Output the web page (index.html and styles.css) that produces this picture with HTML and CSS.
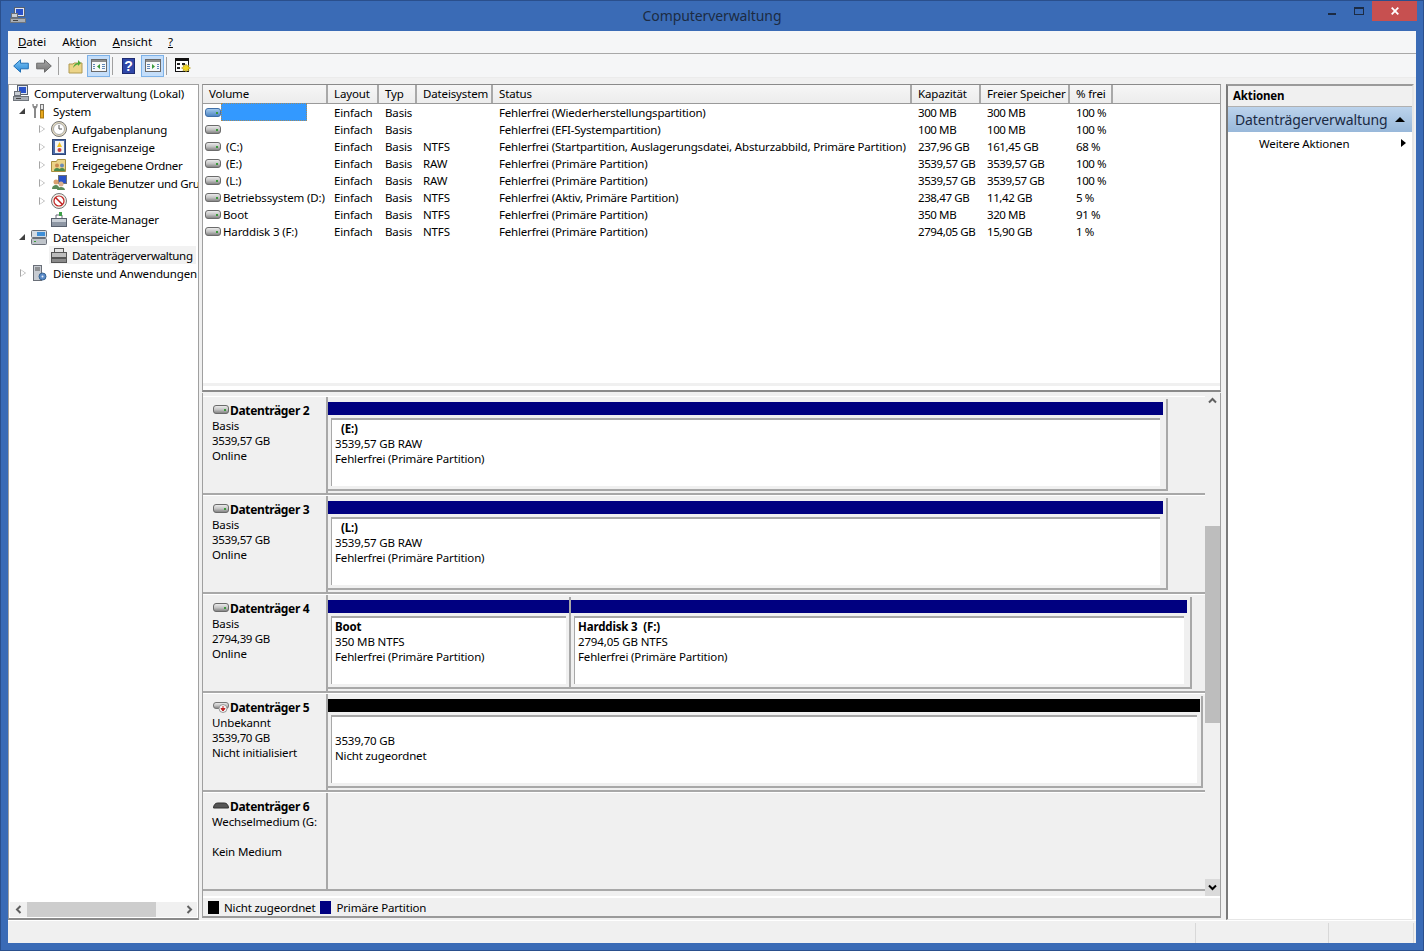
FILE: index.html
```html
<!DOCTYPE html>
<html lang="de">
<head>
<meta charset="utf-8">
<title>Computerverwaltung</title>
<link rel="stylesheet" href="styles.css">
</head>
<body>
<svg class="defs" width="0" height="0">
  <defs>
    <linearGradient id="drv" x1="0" y1="0" x2="0" y2="1"><stop offset="0" stop-color="#f0f0f0"/><stop offset=".5" stop-color="#c4c4c4"/><stop offset="1" stop-color="#7d7d7d"/></linearGradient>
    <linearGradient id="drvb" x1="0" y1="0" x2="0" y2="1"><stop offset="0" stop-color="#a8cdf0"/><stop offset="1" stop-color="#4a82c0"/></linearGradient>
    <linearGradient id="arrb" x1="0" y1="0" x2="0" y2="1"><stop offset="0" stop-color="#7cc4f4"/><stop offset="1" stop-color="#2a88d8"/></linearGradient>
    <linearGradient id="arrg" x1="0" y1="0" x2="0" y2="1"><stop offset="0" stop-color="#a8a8a8"/><stop offset="1" stop-color="#747474"/></linearGradient>
    <symbol id="drive" viewBox="0 0 16 10"><rect x=".5" y=".5" width="15" height="8" rx="2.500" fill="url(#drv)" stroke="#6b6b6b"/><rect x="11" y="4" width="2" height="2" fill="#3c9a3c"/></symbol>
    <symbol id="driveb" viewBox="0 0 16 10"><rect x=".5" y=".5" width="15" height="8" rx="2.500" fill="url(#drvb)" stroke="#3f6fa8"/><rect x="11" y="4" width="2" height="2" fill="#3c9a3c"/></symbol>
    <symbol id="pc" viewBox="0 0 16 16"><rect x="4.500" y=".5" width="10" height="9" fill="#dfe6f2" stroke="#59616e"/><rect x="6" y="2" width="7" height="6" fill="#2a52c8"/><rect x="1.500" y="6.500" width="6" height="4" fill="#c8cdd4" stroke="#6a6f78"/><rect x=".5" y="11.500" width="15" height="4" fill="#a9aeb5" stroke="#70757c"/><path d="M3 13.500h5" stroke="#444"/></symbol>
  </defs>
</svg>
<div class="window">
  <header class="titlebar">
    <svg class="app-icon" width="16" height="16"><use href="#pc"/></svg>
    <span class="title">Computerverwaltung</span>
    <div class="caption">
      <svg class="cap-min" width="8" height="2"><rect width="8" height="2" fill="#1c2b43"/></svg>
      <svg class="cap-max" width="10" height="8"><rect x=".5" y=".5" width="9" height="7" fill="none" stroke="#1c2b43"/><rect width="10" height="2" fill="#1c2b43"/></svg>
      <div class="cap-close"><svg width="8" height="8" viewBox="0 0 8 8"><path d="M.7.7l6.600 6.600M7.300.7L.7 7.300" stroke="#fff" stroke-width="1.800"/></svg></div>
    </div>
  </header>

  <div class="client">
    <nav class="menubar">
      <span class="menu"><u>D</u>atei</span>
      <span class="menu">Ak<u>t</u>ion</span>
      <span class="menu"><u>A</u>nsicht</span>
      <span class="menu"><u>?</u></span>
    </nav>

    <div class="toolbar">
      <svg width="16" height="14" viewBox="0 0 16 14"><path d="M.7 7L7.500.8v3.400h7.800v5.600H7.500v3.400z" fill="url(#arrb)" stroke="#1f6fb5"/></svg>
      <svg class="tool-fwd" width="16" height="14" viewBox="0 0 16 14"><path d="M15.300 7L8.500.8v3.400H.7v5.600h7.800v3.400z" fill="url(#arrg)" stroke="#6a6a6a"/></svg>
      <i class="sep sep1"></i>
      <svg class="tool-up" width="15" height="16" viewBox="0 0 15 16"><path d="M1 6h4l1-1h8v10H1z" fill="#ecd488" stroke="#b09a50"/><path d="M5 10c1-4 3-5 5-5V2l3 3-3 3V6.500c-2 0-3 1.500-5 3.500z" fill="#4fa93a"/></svg>
      <span class="tool-on"><svg width="16" height="13" viewBox="0 0 16 13"><rect x=".5" y=".5" width="15" height="12" fill="#f8f8f8" stroke="#6a6a6a"/><rect x="1" y="1" width="14" height="2" fill="#8c8c8c"/><path d="M2 5h2v1H2zM2 7h2v1H2zM2 9h2v1H2zM11 5h3v1h-3zM11 7h3v1h-3zM11 9h3v1h-3z" fill="#5f86b8"/><path d="M9 5v5L6 7.500z" fill="#3a9a3a"/></svg></span>
      <i class="sep sep2"></i>
      <svg class="tool-help" width="13" height="16" viewBox="0 0 13 16"><rect x=".5" y=".5" width="12" height="15" fill="#2f47a8" stroke="#1d2a70"/><text x="6.500" y="12.500" text-anchor="middle" class="help-q">?</text></svg>
      <span class="tool-on"><svg width="16" height="13" viewBox="0 0 16 13"><rect x=".5" y=".5" width="15" height="12" fill="#f8f8f8" stroke="#6a6a6a"/><rect x="1" y="1" width="14" height="2" fill="#8c8c8c"/><path d="M2 5h3v1H2zM2 7h3v1H2zM2 9h3v1H2zM12 5h2v1h-2zM12 7h2v1h-2zM12 9h2v1h-2z" fill="#5f86b8"/><path d="M7 5v5l3-2.500z" fill="#3a9a3a"/></svg></span>
      <i class="sep sep3"></i>
      <svg width="16" height="16" viewBox="0 0 16 16"><rect x=".5" y=".5" width="13" height="13" fill="#fff" stroke="#111"/><rect x="1" y="1" width="12" height="2" fill="#111"/><path d="M2 5h3v2H2zM7 5h3v2H7zM2 9h3v2H2z" fill="#222"/><path d="M11 6l1 2 2-1-.5 2 2 1-2 1 .5 2-2-1-1 2-1-2-2 1 .5-2-2-1 2-1-.5-2 2 1z" fill="#f4d81c" stroke="#a08a10" stroke-width=".5"/></svg>
    </div>

    <div class="strip"></div>

    <div class="panes">
      <aside class="tree-pane">
        <ul class="tree">
          <li class="node lvl0"><svg width="16" height="16"><use href="#pc"/></svg><span>Computerverwaltung (Lokal)</span></li>
          <li class="node lvl1"><b class="tw open"></b><svg width="16" height="16" viewBox="0 0 16 16"><path d="M4 3v12" stroke="#8a8a8a" stroke-width="2"/><path d="M2 1c0 3 1 4 2 4s2-1 2-4" fill="none" stroke="#8a8a8a" stroke-width="1.500"/><rect x="9.500" y="1.500" width="3" height="5" fill="#e8e8e8" stroke="#777"/><rect x="9.500" y="7.500" width="3" height="7.500" fill="#e8a81c" stroke="#a87810"/></svg><span>System</span></li>
          <li class="node lvl2"><b class="tw"></b><svg width="16" height="16" viewBox="0 0 16 16"><circle cx="8" cy="8" r="7.500" fill="#e6dcc0" stroke="#777"/><circle cx="8" cy="8" r="5.500" fill="#fff" stroke="#aaa"/><path d="M8 4v4h3" fill="none" stroke="#555"/></svg><span>Aufgabenplanung</span></li>
          <li class="node lvl2"><b class="tw"></b><svg width="16" height="16" viewBox="0 0 16 16"><rect x="1.500" y=".5" width="13" height="15" fill="#4a6aa8" stroke="#2f4676"/><rect x="4" y="2" width="9" height="12" fill="#f4f4f4"/><path d="M8.500 3l2.500 5H6z" fill="#f0c020"/><circle cx="8.500" cy="11" r="2" fill="#c84040"/></svg><span>Ereignisanzeige</span></li>
          <li class="node lvl2"><b class="tw"></b><svg width="16" height="16" viewBox="0 0 16 16"><path d="M.5 4.500h5l1-2h8v12H.5z" fill="#ecd488" stroke="#a89040"/><circle cx="6" cy="8.500" r="2" fill="#c88a50"/><circle cx="11" cy="8.500" r="2" fill="#6a8ab8"/><path d="M3 14c0-2 1-3 3-3s3 1 3 3zM8 14c0-2 1-3 3-3s3 1 3 3z" fill="#4a8a4a"/></svg><span class="tight">Freigegebene Ordner</span></li>
          <li class="node lvl2"><b class="tw"></b><svg width="16" height="16" viewBox="0 0 16 16"><rect x="7.500" y=".5" width="8" height="8" fill="#2a52c8" stroke="#6a6f78"/><circle cx="5" cy="7" r="2.500" fill="#d8a070"/><circle cx="10" cy="9" r="2.500" fill="#d8b090"/><path d="M1 14c0-3 2-4 4-4s3 1 3 4zM6 15c0-2 2-3 4-3s4 1 4 3z" fill="#5a8a5a"/></svg><span class="clip tight">Lokale Benutzer und Gru</span></li>
          <li class="node lvl2"><b class="tw"></b><svg width="16" height="16" viewBox="0 0 16 16"><circle cx="8" cy="8" r="7.500" fill="#f0f0e8" stroke="#777"/><circle cx="8" cy="8" r="5" fill="#fff" stroke="#c02020" stroke-width="1.200"/><path d="M4.500 4.500l7 7" stroke="#c02020" stroke-width="1.500"/></svg><span>Leistung</span></li>
          <li class="node lvl2"><i class="tw-space"></i><svg width="16" height="16" viewBox="0 0 16 16"><rect x=".5" y="7.500" width="15" height="8" fill="#8d96a3" stroke="#59616e"/><rect x="1" y="8" width="14" height="3" fill="#c8ced6"/><path d="M5 7V4h6v3" fill="none" stroke="#667"/><rect x="8" y="1" width="3" height="4" fill="#3fa04a"/></svg><span>Geräte-Manager</span></li>
          <li class="node lvl1"><b class="tw open"></b><svg width="16" height="16" viewBox="0 0 16 16"><rect x=".5" y="9.500" width="15" height="6" rx="1" fill="#bfc4ca" stroke="#6a6f78"/><rect x=".5" y="1.500" width="15" height="7" rx="1" fill="#d4dbe4" stroke="#6a6f78"/><rect x="6" y="3" width="8" height="4" fill="#3f8fd8"/><rect x="3" y="12" width="2" height="1" fill="#3c9a3c"/></svg><span>Datenspeicher</span></li>
          <li class="node lvl2 selected"><i class="tw-space"></i><svg width="16" height="16" viewBox="0 0 16 16"><rect x="3.500" y="1.500" width="9" height="4" fill="#e4e4e4" stroke="#555"/><rect x=".5" y="5.500" width="15" height="5" fill="#bcbcbc" stroke="#555"/><rect x=".5" y="11.500" width="15" height="4" fill="#8a8a8a" stroke="#555"/></svg><span class="tight">Datenträgerverwaltung</span></li>
          <li class="node lvl1"><b class="tw"></b><svg width="16" height="16" viewBox="0 0 16 16"><rect x="2.500" y=".5" width="8" height="15" fill="#c8ccd2" stroke="#6a6f78"/><path d="M4 3h5M4 5h5" stroke="#555"/><circle cx="11.500" cy="11.500" r="3.500" fill="#5a8ac8" stroke="#35618f"/><circle cx="11.500" cy="11.500" r="1" fill="#e8f0f8"/></svg><span class="clip">Dienste und Anwendungen</span></li>
        </ul>
        <div class="hscroll">
          <svg class="arr" width="7" height="9" viewBox="0 0 7 9"><path d="M5.500 1L2 4.500 5.500 8" fill="none" stroke="#606060" stroke-width="2"/></svg>
          <div class="hthumb"></div>
          <svg class="arr" width="7" height="9" viewBox="0 0 7 9"><path d="M1.500 1L5 4.500 1.500 8" fill="none" stroke="#606060" stroke-width="2"/></svg>
        </div>
      </aside>

      <main class="center">
        <section class="list">
          <div class="row head">
            <span class="hc">Volume</span><span class="hc">Layout</span><span class="hc">Typ</span><span class="hc">Dateisystem</span><span class="hc">Status</span><span class="hc">Kapazität</span><span class="hc">Freier Speicher</span><span class="hc">% frei</span>
          </div>
          <div class="row"><span class="vol"><svg width="16" height="10"><use href="#driveb"/></svg><span class="redact"></span></span><span>Einfach</span><span>Basis</span><span></span><span>Fehlerfrei (Wiederherstellungspartition)</span><span>300 MB</span><span>300 MB</span><span>100 %</span></div>
          <div class="row"><span class="vol"><svg width="16" height="10"><use href="#drive"/></svg></span><span>Einfach</span><span>Basis</span><span></span><span>Fehlerfrei (EFI-Systempartition)</span><span>100 MB</span><span>100 MB</span><span>100 %</span></div>
          <div class="row"><span class="vol"><svg class="dr" width="16" height="10"><use href="#drive"/></svg><span class="drv-l">(C:)</span></span><span>Einfach</span><span>Basis</span><span>NTFS</span><span>Fehlerfrei (Startpartition, Auslagerungsdatei, Absturzabbild, Primäre Partition)</span><span>237,96 GB</span><span>161,45 GB</span><span>68 %</span></div>
          <div class="row"><span class="vol"><svg class="dr" width="16" height="10"><use href="#drive"/></svg><span class="drv-l">(E:)</span></span><span>Einfach</span><span>Basis</span><span>RAW</span><span>Fehlerfrei (Primäre Partition)</span><span>3539,57 GB</span><span>3539,57 GB</span><span>100 %</span></div>
          <div class="row"><span class="vol"><svg class="dr" width="16" height="10"><use href="#drive"/></svg><span class="drv-l">(L:)</span></span><span>Einfach</span><span>Basis</span><span>RAW</span><span>Fehlerfrei (Primäre Partition)</span><span>3539,57 GB</span><span>3539,57 GB</span><span>100 %</span></div>
          <div class="row"><span class="vol"><svg class="dr" width="16" height="10"><use href="#drive"/></svg><span>Betriebssystem (D:)</span></span><span>Einfach</span><span>Basis</span><span>NTFS</span><span>Fehlerfrei (Aktiv, Primäre Partition)</span><span>238,47 GB</span><span>11,42 GB</span><span>5 %</span></div>
          <div class="row"><span class="vol"><svg class="dr" width="16" height="10"><use href="#drive"/></svg><span>Boot</span></span><span>Einfach</span><span>Basis</span><span>NTFS</span><span>Fehlerfrei (Primäre Partition)</span><span>350 MB</span><span>320 MB</span><span>91 %</span></div>
          <div class="row"><span class="vol"><svg class="dr" width="16" height="10"><use href="#drive"/></svg><span>Harddisk 3 (F:)</span></span><span>Einfach</span><span>Basis</span><span>NTFS</span><span>Fehlerfrei (Primäre Partition)</span><span>2794,05 GB</span><span>15,90 GB</span><span>1 %</span></div>
          <div class="list-band"></div>
        </section>

        <section class="disks">
          <div class="disk-area">
            <div class="disk-scroll">
              <div class="disk">
                <div class="disk-info"><div class="disk-name"><svg width="16" height="10"><use href="#drive"/></svg><b>Datenträger 2</b></div><div>Basis</div><div>3539,57 GB</div><div>Online</div></div>
                <div class="disk-map w-raw"><div class="part"><div class="bar"></div><div class="box"><div class="p-name indent">(E:)</div><div>3539,57 GB RAW</div><div>Fehlerfrei (Primäre Partition)</div></div></div></div>
              </div>
              <div class="disk">
                <div class="disk-info"><div class="disk-name"><svg width="16" height="10"><use href="#drive"/></svg><b>Datenträger 3</b></div><div>Basis</div><div>3539,57 GB</div><div>Online</div></div>
                <div class="disk-map w-raw"><div class="part"><div class="bar"></div><div class="box"><div class="p-name indent">(L:)</div><div>3539,57 GB RAW</div><div>Fehlerfrei (Primäre Partition)</div></div></div></div>
              </div>
              <div class="disk">
                <div class="disk-info"><div class="disk-name"><svg width="16" height="10"><use href="#drive"/></svg><b>Datenträger 4</b></div><div>Basis</div><div>2794,39 GB</div><div>Online</div></div>
                <div class="disk-map w-two">
                  <div class="part p-boot"><div class="bar"></div><div class="box"><div class="p-name">Boot</div><div>350 MB NTFS</div><div>Fehlerfrei (Primäre Partition)</div></div></div>
                  <div class="part p-grow"><div class="bar"></div><div class="box"><div class="p-name">Harddisk 3&nbsp; (F:)</div><div>2794,05 GB NTFS</div><div>Fehlerfrei (Primäre Partition)</div></div></div>
                </div>
              </div>
              <div class="disk">
                <div class="disk-info"><div class="disk-name"><svg width="16" height="12" viewBox="0 0 16 12"><rect x=".5" y="1.500" width="15" height="6" rx="2.500" fill="url(#drv)" stroke="#777"/><circle cx="10" cy="7.500" r="4" fill="#f4f4f4" stroke="#999"/><path d="M10 5v3M8 7.500l2 2.500 2-2.500z" stroke="#c02020" fill="#c02020"/></svg><b>Datenträger 5</b></div><div>Unbekannt</div><div>3539,70 GB</div><div>Nicht initialisiert</div></div>
                <div class="disk-map w-un"><div class="part"><div class="bar bar-black"></div><div class="box"><div class="p-name">&nbsp;</div><div>3539,70 GB</div><div>Nicht zugeordnet</div></div></div></div>
              </div>
              <div class="disk disk-last">
                <div class="disk-info"><div class="disk-name"><svg width="16" height="10" viewBox="0 0 16 10"><path d="M.5 7c0-3 2-5 4-5h7c2 0 4 2 4 5z" fill="#555" stroke="#333"/></svg><b>Datenträger 6</b></div><div class="media">Wechselmedium (G:</div><div>&nbsp;</div><div>Kein Medium</div></div>
                <div class="disk-map"></div>
              </div>
            </div>
            <div class="vscroll">
              <svg class="v-up" width="9" height="7" viewBox="0 0 9 7"><path d="M1 5.500L4.500 2 8 5.500" fill="none" stroke="#606060" stroke-width="2"/></svg>
              <div class="vthumb"></div>
              <div class="v-down"><svg width="9" height="7" viewBox="0 0 9 7"><path d="M1 1.500L4.500 5 8 1.500" fill="none" stroke="#000" stroke-width="2"/></svg></div>
            </div>
          </div>
          <div class="legend"><i class="sw sw-k"></i><span>Nicht zugeordnet</span><i class="sw sw-b"></i><span>Primäre Partition</span></div>
        </section>
      </main>

      <aside class="actions">
        <div class="a-head">Aktionen</div>
        <div class="a-sec"><span>Datenträgerverwaltung</span><i class="tri-up"></i></div>
        <div class="a-item"><span>Weitere Aktionen</span><i class="tri-right"></i></div>
      </aside>
    </div>

    <footer class="status"><i class="st st1"></i><i class="st st2"></i><i class="st st3"></i></footer>
  </div>
</div>
</body>
</html>
```
FILE: styles.css
```css
* { box-sizing: border-box; }
html, body { margin: 0; padding: 0; }
body { width: 1424px; height: 951px; overflow: hidden; font: 11.5px/17px "Noto Sans", "Open Sans", sans-serif; letter-spacing: -.15px; color: #000; background: #3a6bb6; }
.defs { position: absolute; }
ul { list-style: none; margin: 0; padding: 0; }
svg { display: block; flex: none; }

.window { width: 1424px; height: 951px; display: flex; flex-direction: column; background: #3a6bb6; border: 1px solid #2a4f8c; padding: 0 7px 7px 7px; }
.titlebar { height: 30px; display: flex; align-items: flex-start; position: relative; flex: none; }
.app-icon { margin: 6px 0 0 2px; }
.title { position: absolute; left: 0; right: 0; top: 5px; text-align: center; font-size: 14px; letter-spacing: -.1px; line-height: 20px; color: #1c2b43; }
.caption { margin-left: auto; display: flex; align-items: flex-start; }
.cap-min { margin: 12px 18px 0 0; }
.cap-max { margin: 6px 8px 0 0; }
.cap-close { width: 45px; height: 20px; background: #c75050; display: flex; align-items: center; justify-content: center; margin: 0 -1px 0 0; }

.client { flex: 1; display: flex; flex-direction: column; background: #f0f0f0; min-height: 0; }
.menubar { height: 23px; background: #f5f6f7; display: flex; padding: 2px 0 0 10px; gap: 16px; border-bottom: 1px solid #a8a8a8; flex: none; }
.menu { line-height: 17px; letter-spacing: -.05px; }
.toolbar { height: 23px; background: #f5f6f7; display: flex; align-items: center; padding-left: 5px; flex: none; }
.tool-fwd { margin-left: 7px; }
.sep { width: 1px; height: 18px; background: #a0a0a0; flex: none; }
.sep1 { margin: 0 9px 0 6px; }
.sep2 { margin: 0 9px 0 2px; }
.sep3 { margin: 0 8px 0 2px; }
.tool-up { margin-right: 4px; }
.tool-on { width: 23px; height: 22px; background: #c4defa; border: 1px solid #7db2e8; display: flex; align-items: center; justify-content: center; flex: none; }
.tool-help { margin-right: 6px; }
.help-q { font: bold 14px "Liberation Sans", sans-serif; fill: #fff; }
.strip { height: 7px; background: #f0f0f0; border-top: 1px solid #ebebeb; flex: none; }

.panes { flex: 1; display: flex; min-height: 0; padding-right: 2px; }

.tree-pane { width: 191px; flex: none; background: #fff; border: 1px solid #a0a0a0; border-width: 1px 1px 2px 1px; border-color: #a0a0a0 #a0a0a0 #8a8a8a #a0a0a0; display: flex; flex-direction: column; overflow: hidden; }
.tree { flex: 1; }
.node { height: 18px; display: flex; align-items: center; white-space: nowrap; overflow: hidden; }
.lvl0 { height: 17px; padding: 0 0 1px 4px; }
.lvl0 svg { margin-right: 5px; }
.lvl1 { padding-left: 10px; }
.lvl1 svg { margin-right: 6px; }
.lvl2 { padding-left: 29px; }
.lvl2 svg { margin-right: 5px; }
.tw { width: 9px; height: 9px; flex: none; margin-right: 3px; position: relative; }
.tw::before { content: ""; position: absolute; left: 1px; top: 0; border-left: 6px solid #a6a6a6; border-top: 4.500px solid transparent; border-bottom: 4.500px solid transparent; }
.tw::after { content: ""; position: absolute; left: 2px; top: 1.500px; border-left: 4px solid #fff; border-top: 3px solid transparent; border-bottom: 3px solid transparent; }
.tw.open::before { border: 0; border-right: 6px solid #404040; border-top: 6px solid transparent; top: 1px; left: 0; }
.tw.open::after { display: none; }
.tw-space { width: 9px; flex: none; }
.lvl2 .tw, .lvl2 .tw-space { margin-right: 4px; }
.selected { background: linear-gradient(#f2f2f2, #f2f2f2) 40px 0 / 147px 100% no-repeat; }
.clip { overflow: hidden; }
.tight { letter-spacing: -.3px; }

.hscroll { height: 15px; margin: 0 1px 1px 1px; background: #f0f0f0; display: flex; align-items: center; flex: none; }
.arr { margin: 0 5px; }
.hthumb { width: 129px; height: 15px; background: #cdcdcd; }
.hscroll .arr:last-child { margin-left: auto; margin-right: 4px; }

.center { width: 1019px; margin-left: 3px; flex: none; display: flex; flex-direction: column; min-height: 0; }
.list { height: 308px; background: #fff; border: 1px solid #a0a0a0; border-bottom: 2px solid #8a8a8a; border-top-color: #8a8a8a; flex: none; display: flex; flex-direction: column; }
.list-band { margin: auto 0 4px; height: 3px; background: #f0f0f0; flex: none; }
.row { display: grid; grid-template-columns: 125px 51px 38px 76px 419px 69px 89px 43px; height: 17px; line-height: 17px; white-space: nowrap; flex: none; }
.row > span { padding-left: 6px; overflow: hidden; }
.row > span:nth-child(5):not(.hc) { letter-spacing: -.18px; }
.row > span:nth-child(n+6):not(.hc) { letter-spacing: -.4px; }
.row.head { height: 19px; background: linear-gradient(#f6f6f6, #ececec); border-bottom: 1px solid #9a9a9a; line-height: 18px; }
.hc { border-right: 2px solid #a8a8a8; }
.row > .vol { display: flex; align-items: center; padding-left: 2px; overflow: visible; }
.dr { margin-right: 2px; }
.redact { width: 86px; height: 18px; background: #3399ff; border: 1px dotted #a08a60; margin-top: -1px; flex: none; }
.drv-l { margin-left: 3px; }

.disks { flex: 1; display: flex; flex-direction: column; border: 1px solid #a0a0a0; border-top: 0; border-bottom: 2px solid #9a9a9a; min-height: 0; margin: 1px 0 2px; background: #f0f0f0; }
.disk-area { flex: 1; display: flex; min-height: 0; padding-top: 3px; }
.disk-scroll { width: 1002px; flex: none; }
.disk { display: flex; height: 99px; border-top: 1px solid #fff; }
.disk-info { width: 125px; flex: none; padding: 6px 0 0 9px; line-height: 15px; border-right: 2px solid #a8a8a8; border-bottom: 2px solid #a8a8a8; overflow: hidden; white-space: nowrap; }
.disk-info > div { height: 15px; }
.disk-info > div:nth-child(3) { letter-spacing: -.35px; }
.disk-info > .media { letter-spacing: -.15px; }
.disk-info > .disk-name { display: flex; align-items: center; font-size: 12px; letter-spacing: -.35px; }
.disk-name svg { margin: -2px 1px 0 1px; }
.disk-map { flex: 1; display: flex; border-bottom: 2px solid #a8a8a8; padding: 2px 0 2px 0; min-width: 0; }
.disk-last .disk-map { padding: 0; }
.w-raw { padding-right: 37px; }
.w-two { padding-right: 13px; }
.w-un { padding-right: 2px; }
.part { flex: 1; display: flex; flex-direction: column; padding: 3px 3px 0 0; border: 1px solid #a8a8a8; border-width: 0 2px 2px 0; min-width: 0; }
.w-un .part { padding-right: 1px; }
.bar { height: 13px; background: #000080; flex: none; }
.bar-black { background: #000; }
.box { flex: 1; margin: 3px; background: #fff; border-top: 2px solid #a8a8a8; border-left: 1px solid #a8a8a8; padding: 1px 0 0 3px; line-height: 15px; white-space: nowrap; overflow: hidden; }
.box > div { height: 15px; }
.p-name { font-weight: 700; }
.indent { padding-left: 6px; }
.p-boot { width: 243px; flex: none; padding-right: 0; }
.p-grow { flex: 1; }

.vscroll { width: 15px; flex: none; background: #f0f0f0; display: flex; flex-direction: column; align-items: center; position: relative; }
.v-up { margin-top: 1px; }
.vthumb { position: absolute; left: 0; top: 130px; width: 15px; height: 197px; background: #bdbdbd; }
.v-down { position: absolute; left: 0; bottom: 0; width: 15px; height: 17px; background: #dadada; display: flex; align-items: center; justify-content: center; }

.legend { height: 20px; border-top: 2px solid #fff; display: flex; align-items: center; padding-left: 5px; flex: none; }
.sw { width: 11px; height: 13px; flex: none; margin-right: 5px; }
.sw-k { background: #000; }
.sw-b { background: #000080; margin: 0 5px 0 5px; }

.actions { flex: 1; margin-left: 5px; background: #fff; border-left: 2px solid #7a7a7a; border-top: 2px solid #9a9a9a; border-right: 2px solid #e6e6e6; border-bottom: 1px solid #e6e6e6; min-width: 0; }
.a-head { height: 21px; background: #f0f0f0; font-weight: 700; line-height: 20px; padding-left: 5px; border-bottom: 1px solid #b0b0b0; }
.a-sec { height: 25px; display: flex; align-items: center; background: linear-gradient(#bcd3ec, #98b8da); padding-left: 7px; font-size: 14px; letter-spacing: -.1px; color: #1a2a44; }
.tri-up { margin-left: auto; margin-right: 7px; border: 5px solid transparent; border-top: 0; border-bottom: 5px solid #000; }
.a-item { height: 22px; display: flex; align-items: center; padding-left: 31px; }
.tri-right { margin-left: auto; margin-right: 6px; border: 4.500px solid transparent; border-right: 0; border-left: 5px solid #000; }

.status { height: 23px; flex: none; display: flex; border-top: 1px solid #fff; padding-top: 2px; }
.st { border-right: 1px solid #d8d8d8; height: 20px; display: block; }
.st1 { width: 1188px; flex: none; }
.st2 { width: 133px; flex: none; }
.st3 { flex: 1; margin-right: 2px; }
```
